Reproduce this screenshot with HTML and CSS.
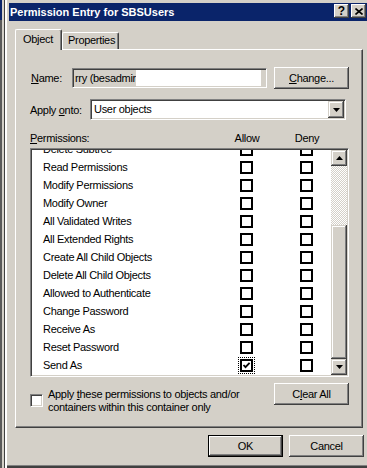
FILE: index.html
```html
<!DOCTYPE html>
<html>
<head>
<meta charset="utf-8">
<title>Permission Entry for SBSUsers</title>
<link rel="stylesheet" href="styles.css">
</head>
<body>
<div class="screen">
  <div class="behind"></div>
  <div class="window">
    <div class="titlebar">
      <span class="title">Permission Entry for SBSUsers</span>
      <div class="caps">
        <span class="capbtn q">?</span>
        <span class="capbtn"><svg width="8" height="7" viewBox="0 0 8 7"><path d="M0.5 0.5 L7.5 6.5 M7.5 0.5 L0.5 6.5" stroke="#000" stroke-width="1.6" fill="none"/></svg></span>
      </div>
    </div>
    <div class="tabs">
      <div class="tab active">Object</div>
      <div class="tab">Properties</div>
    </div>
    <div class="panel">
      <div class="row name-row">
        <span class="lbl lbl-name"><u>N</u>ame:</span>
        <div class="field sunken"><span class="val">rry (besadmir</span><span class="redact"></span></div>
        <button class="btn change"><u>C</u>hange...</button>
      </div>
      <div class="row apply-row">
        <span class="lbl lbl-apply">Apply <u>o</u>nto:</span>
        <div class="combo sunken">
          <span class="combo-text">User objects</span>
          <span class="dd raised"><svg width="7" height="4" viewBox="0 0 7 4"><polygon points="0,0 7,0 3.5,4" fill="#000"/></svg></span>
        </div>
      </div>
      <div class="perm-head">
        <span><u>P</u>ermissions:</span>
        <span class="ph-col">Allow</span>
        <span></span>
        <span class="ph-col">Deny</span>
      </div>
      <div class="listbox sunken">
        <div class="list-view">
          <div class="rows">
            <div class="prow"><span>Delete Subtree</span><span class="cb"></span><span></span><span class="cb"></span></div>
            <div class="prow"><span>Read Permissions</span><span class="cb"></span><span></span><span class="cb"></span></div>
            <div class="prow"><span>Modify Permissions</span><span class="cb"></span><span></span><span class="cb"></span></div>
            <div class="prow"><span>Modify Owner</span><span class="cb"></span><span></span><span class="cb"></span></div>
            <div class="prow"><span>All Validated Writes</span><span class="cb"></span><span></span><span class="cb"></span></div>
            <div class="prow"><span>All Extended Rights</span><span class="cb"></span><span></span><span class="cb"></span></div>
            <div class="prow"><span>Create All Child Objects</span><span class="cb"></span><span></span><span class="cb"></span></div>
            <div class="prow"><span>Delete All Child Objects</span><span class="cb"></span><span></span><span class="cb"></span></div>
            <div class="prow"><span>Allowed to Authenticate</span><span class="cb"></span><span></span><span class="cb"></span></div>
            <div class="prow"><span>Change Password</span><span class="cb"></span><span></span><span class="cb"></span></div>
            <div class="prow"><span>Receive As</span><span class="cb"></span><span></span><span class="cb"></span></div>
            <div class="prow"><span>Reset Password</span><span class="cb"></span><span></span><span class="cb"></span></div>
            <div class="prow"><span>Send As</span><span class="cb checked focus"><svg width="9" height="9" viewBox="0 0 9 9"><path d="M1.5 4 L3.5 6.2 L7.6 1.8" stroke="#000" stroke-width="1.8" fill="none"/></svg></span><span></span><span class="cb"></span></div>
          </div>
        </div>
        <div class="vscroll">
          <span class="sbtn raised"><svg width="7" height="4" viewBox="0 0 7 4"><polygon points="0,4 7,4 3.5,0" fill="#000"/></svg></span>
          <span class="track"></span>
          <span class="thumb raised"></span>
          <span class="sbtn raised"><svg width="7" height="4" viewBox="0 0 7 4"><polygon points="0,0 7,0 3.5,4" fill="#000"/></svg></span>
        </div>
      </div>
      <div class="bottom-row">
        <div class="apply">
          <span class="cb2"></span>
          <span class="apply-text">Apply <u>t</u>hese permissions to objects and/or<br>containers within this container only</span>
        </div>
        <button class="btn">C<u>l</u>ear All</button>
      </div>
    </div>
    <div class="actions">
      <button class="btn default">OK</button>
      <button class="btn">Cancel</button>
    </div>
  </div>
</div>
</body>
</html>
```
FILE: styles.css
```css
* { box-sizing: border-box; }
html, body { margin: 0; padding: 0; }
body {
  width: 367px;
  height: 468px;
  overflow: hidden;
  background: #d4d0c8;
  font-family: "Liberation Sans", Arial, sans-serif;
  font-size: 11px;
  letter-spacing: -0.3px;
  color: #000;
}
.screen { display: flex; width: 367px; height: 468px; }
.behind {
  flex: none;
  width: 5px;
  background:
    linear-gradient(#0a246a, #0a246a) 0 0 / 2px 20px no-repeat,
    linear-gradient(to right, #5a5a5a 0 2px, #d4d0c8 2px 4px, #404040 4px 5px);
}
.window {
  flex: 1;
  min-width: 0;
  background: #d4d0c8;
  border-left: 2px solid #fff;
  padding: 3px 0 0 2px;
  box-shadow: inset 0 -2px #404040, inset 0 -3px #808080;
}
.titlebar {
  height: 18px;
  background: #0a246a;
  display: flex;
  justify-content: space-between;
  align-items: flex-start;
  color: #fff;
}
.title { font-weight: bold; line-height: 18px; padding-left: 1px; letter-spacing: 0; }
.caps { display: flex; gap: 2px; margin: 1px 1px 0 0; }
.capbtn {
  width: 15px;
  height: 14px;
  background: #d4d0c8;
  color: #000;
  display: flex;
  align-items: center;
  justify-content: center;
  box-shadow: inset -1px -1px #404040, inset 1px 1px #fff, inset -2px -2px #808080;
}
.capbtn.q { font-weight: bold; font-size: 12px; line-height: 14px; letter-spacing: 0; }

.raised { background: #d4d0c8; box-shadow: inset -1px -1px #404040, inset 1px 1px #d4d0c8, inset -2px -2px #808080, inset 2px 2px #fff; }
.sunken {
  border: 1px solid;
  border-color: #808080 #fff #fff #808080;
  padding: 1px;
  box-shadow: inset 1px 1px #404040, inset -1px -1px #d4d0c8;
}

.tabs {
  display: flex;
  align-items: flex-end;
  height: 21px;
  margin: 8px 0 -1px 6px;
  position: relative;
  z-index: 1;
}
.tab {
  background: #d4d0c8;
  border-top: 1px solid #fff;
  border-left: 1px solid #fff;
  border-right: 1px solid #404040;
  box-shadow: inset -1px 0 #808080;
  border-radius: 2px 2px 0 0;
  width: 57px;
  height: 17px;
  margin-bottom: 1px;
  padding-left: 5px;
  line-height: 14px;
}
.tab.active { width: 47px; height: 21px; margin-bottom: 0; padding: 2px 0 0 7px; }

.panel {
  margin-left: 6px;
  width: 348px;
  height: 379px;
  border-top: 1px solid #fff;
  border-left: 1px solid #fff;
  border-right: 1px solid #404040;
  border-bottom: 1px solid #404040;
  box-shadow: inset -1px -1px #808080;
  padding: 17px 0 0 14px;
}
.row { display: flex; align-items: flex-start; }
.name-row { height: 22px; }
.lbl-name { width: 42px; line-height: 22px; padding-left: 1px; }
.field {
  width: 195px;
  height: 20px;
  margin-top: 1px;
  background: #d4d0c8;
  display: flex;
  overflow: hidden;
}
.val { line-height: 16px; padding-left: 1px; white-space: nowrap; }
.redact { width: 125px; height: 100%; background: #fff; flex: none; }
.btn {
  font: inherit;
  letter-spacing: inherit;
  color: #000;
  border: 0;
  padding: 0;
  width: 75px;
  height: 22px;
  line-height: 22px;
  background: #d4d0c8;
  box-shadow: inset -1px -1px #404040, inset 1px 1px #fff, inset -2px -2px #808080;
  text-align: center;
  flex: none;
}
.change { margin-left: 7px; }
.btn.default { border: 1px solid #000; line-height: 20px; }

.apply-row { margin-top: 10px; height: 21px; }
.lbl-apply { width: 60px; line-height: 22px; }
.combo { width: 256px; height: 21px; background: #fff; display: flex; }
.combo-text { flex: 1; line-height: 17px; padding-left: 2px; }
.dd { width: 16px; height: 17px; display: flex; align-items: center; justify-content: center; }

.perm-head {
  margin-top: 8px;
  height: 20px;
  line-height: 20px;
  display: grid;
  grid-template-columns: 197px 40px 20px 40px;
}
.ph-col { text-align: center; }

.listbox { width: 319px; height: 229px; background: #fff; display: flex; }
.list-view { flex: 1; overflow: hidden; }
.rows { margin-top: -10px; }
.prow {
  display: grid;
  grid-template-columns: 197px 13px 47px 13px;
  padding-left: 11px;
  height: 18px;
  line-height: 18px;
  white-space: nowrap;
}
.cb {
  width: 13px;
  height: 13px;
  margin-top: 3px;
  border: 2px solid #000;
  background: #fff;
  display: flex;
  align-items: center;
  justify-content: center;
}
.cb.focus { outline: 1px dotted #000; outline-offset: 1px; }
.vscroll { width: 16px; display: flex; flex-direction: column; flex: none; }
.sbtn { height: 16px; flex: none; display: flex; align-items: center; justify-content: center; }
.track {
  height: 59px;
  flex: none;
  background: repeating-conic-gradient(#fff 0 25%, #d4d0c8 0 50%) 0 0 / 2px 2px;
}
.thumb { flex: 1; }

.bottom-row { margin-top: 6px; width: 319px; display: flex; justify-content: space-between; align-items: flex-start; }
.apply { display: flex; align-items: flex-start; }
.cb2 {
  width: 13px;
  height: 13px;
  margin-top: 11px;
  border: 1px solid;
  border-color: #808080 #fff #fff #808080;
  box-shadow: inset 1px 1px #404040, inset -1px -1px #d4d0c8;
  background: #fff;
  flex: none;
}
.apply-text { margin: 5px 0 0 5px; line-height: 13px; white-space: nowrap; }

.actions { display: flex; gap: 6px; margin-top: 7px; padding-left: 199px; }
```
